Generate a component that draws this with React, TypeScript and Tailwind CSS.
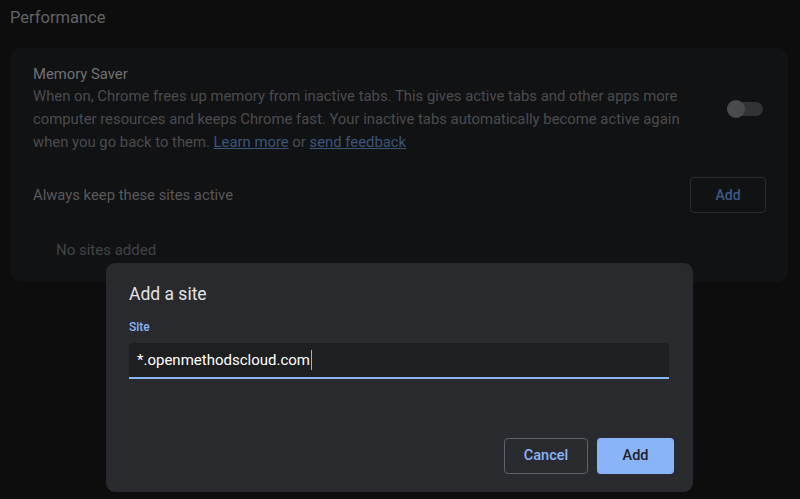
import React from 'react';

export default function App() {
  return (
    <div className="relative h-[499px] w-[800px] overflow-hidden bg-[#0d0d0e] font-['Roboto',sans-serif]">
      <div className="pl-[10px] pr-[12px] pt-[8px]">
        <h2 className="text-[16.5px] leading-[20px] text-[#626365]">Performance</h2>

        <div className="mt-[20px] rounded-[10px] bg-[#111214] pl-[23px] pr-[22px] pt-[15px] pb-[21px]">
          <div className="flex items-center">
            <div className="flex-1">
              <div className="text-[14.8px] leading-[22px] text-[#707173]">Memory Saver</div>
              <p className="text-[14.85px] leading-[23px] text-[#4b4c4e]">
                <span className="block">When on, Chrome frees up memory from inactive tabs. This gives active tabs and other apps more</span>
                <span className="block">computer resources and keeps Chrome fast. Your inactive tabs automatically become active again</span>
                <span className="block">
                  when you go back to them.{' '}
                  <a className="text-[#3c5579] underline">Learn more</a> or{' '}
                  <a className="text-[#3c5579] underline">send feedback</a>
                </span>
              </p>
            </div>
            <div className="relative mr-[3px] h-[14px] w-[36px] rounded-full bg-[#323335]">
              <div className="absolute left-0 top-[-2px] h-[18px] w-[18px] rounded-full bg-[#4a4b4d]" />
            </div>
          </div>

          <div className="mt-[23px] flex items-center justify-between">
            <span className="text-[14.8px] text-[#58595b]">Always keep these sites active</span>
            <button className="h-[36px] w-[76px] rounded-[4px] border border-[#2a2b2e] text-[14px] font-medium text-[#3d5a84]">
              Add
            </button>
          </div>

          <div className="mt-[26px] pl-[23px] text-[15px] leading-[22px] text-[#424345]">No sites added</div>
        </div>
      </div>

      <div className="absolute left-[106px] top-[263px] flex h-[229px] w-[587px] flex-col rounded-[9px] bg-[#292a2e] pl-[23px] pr-[19px] pt-[20px] pb-[18px]">
        <h3 className="text-[17.5px] leading-[22px] text-[#e3e3e3]">Add a site</h3>
        <label className="mt-[15px] text-[12px] font-medium leading-[14px] text-[#8ab4f8]">Site</label>
        <div className="mt-[9px] mr-[5px] flex h-[36px] items-center rounded-t-[4px] border-b-2 border-[#8ab4f8] bg-[#1e1f21] pl-[8px]">
          <span className="text-[15px] text-white">*.openmethodscloud.com</span>
          <span className="ml-[1px] h-[20px] w-[1.5px] bg-[#8ab4f8]" />
        </div>
        <div className="mt-auto flex justify-end gap-[9px]">
          <button className="h-[36px] w-[84px] rounded-[4px] border border-[#5f6368] text-[14.5px] font-medium text-[#8ab4f8]">
            Cancel
          </button>
          <button className="h-[36px] w-[77px] rounded-[4px] bg-[#8ab4f8] text-[14.5px] font-medium text-[#202124]">
            Add
          </button>
        </div>
      </div>
    </div>
  );
}
